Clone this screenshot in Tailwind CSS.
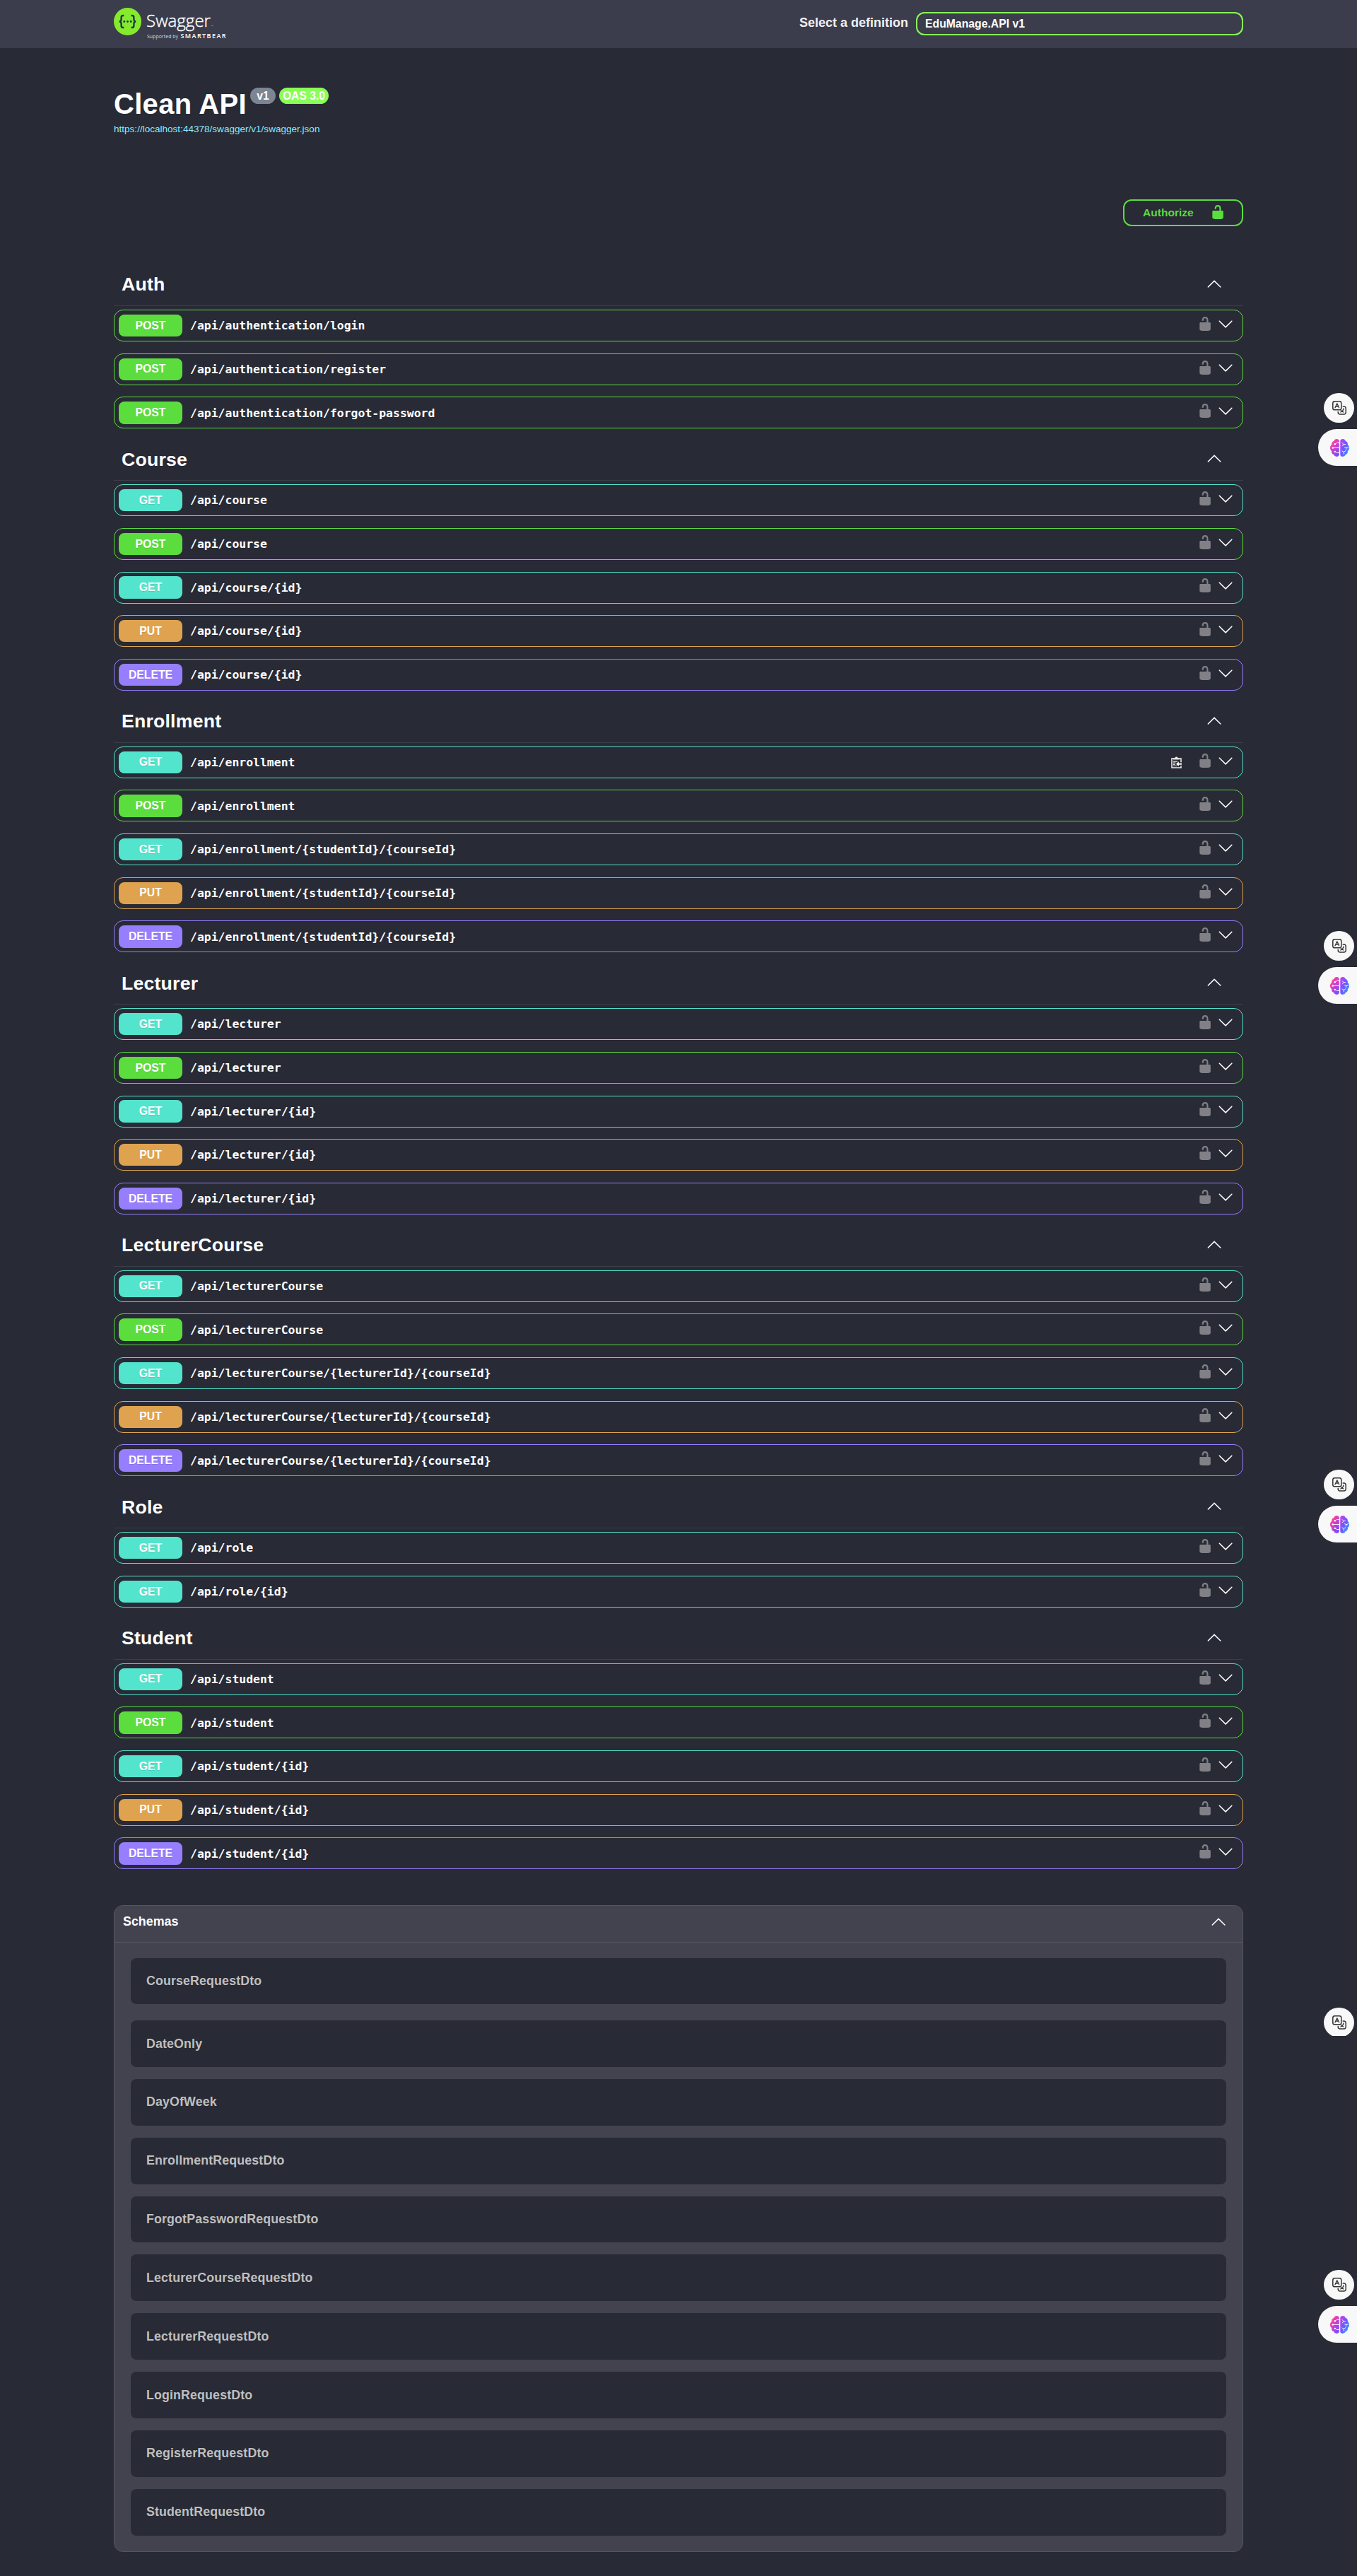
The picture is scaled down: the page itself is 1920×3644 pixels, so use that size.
<!DOCTYPE html>
<html lang="en">
<head>
<meta charset="utf-8">
<title>Swagger UI</title>
<script src="https://cdn.jsdelivr.net/npm/@tailwindcss/browser@4"></script>
</head>
<body class="relative h-[3644px] overflow-x-hidden bg-[#282a35] font-['Liberation_Sans',Arial,sans-serif] text-white">

<svg class="absolute size-0">
  <defs>
  <linearGradient id="bl" x1="0" y1="0" x2="0.7" y2="1"><stop offset="0" stop-color="#ff9a1f"/><stop offset=".35" stop-color="#f03cb4"/><stop offset="1" stop-color="#7a4dff"/></linearGradient>
  <linearGradient id="br" x1="0" y1="0" x2="1" y2="1"><stop offset="0" stop-color="#c83ee8"/><stop offset=".5" stop-color="#6b5cff"/><stop offset="1" stop-color="#1fb0ff"/></linearGradient>
  </defs>
  <symbol id="lock" viewBox="0 0 20 20"><path d="M15.8 8H14V5.6C14 2.703 12.665 1 10 1 7.334 1 6 2.703 6 5.6V6h2v-.801C8 3.754 8.797 3 10 3c1.203 0 2 .754 2 2.199V8H4c-.553 0-1 .646-1 1.199V17c0 .549.428 1.139.951 1.307l1.197.387C5.672 18.861 6.55 19 7.1 19h5.8c.549 0 1.428-.139 1.951-.307l1.196-.387c.524-.167.953-.757.953-1.306V9.199C17 8.646 16.352 8 15.8 8z"/></symbol>
  <symbol id="up" viewBox="0 0 20 20"><path d="M17.418 14.908c.272.268.709.268.979 0s.271-.701 0-.969l-7.908-7.83c-.27-.268-.707-.268-.979 0l-7.908 7.83c-.27.268-.27.701 0 .969.271.268.709.268.979 0L10 7.767l7.418 7.141z"/></symbol>
  <symbol id="down" viewBox="0 0 20 20"><path d="M17.418 6.109c.272-.268.709-.268.979 0s.271.701 0 .969l-7.908 7.83c-.27.268-.707.268-.979 0l-7.908-7.83c-.27-.268-.27-.701 0-.969.271-.268.709-.268.979 0L10 13.25l7.418-7.141z"/></symbol>
  <symbol id="clip" viewBox="0 0 15 17">
    <path d="M1 3h13v13H1z" fill="none" stroke="#e8e8e8" stroke-width="1.6"/>
    <path d="M3 4.6V2.6h2.4a2.1 2.1 0 0 1 4.200 0H12v2z" fill="#e8e8e8"/>
    <path d="M3 7.200h6M3 9.200h3.500M3 11.300h2.500M3 13.500h5" stroke="#e8e8e8" stroke-width="1.200"/>
    <path d="M12.500 8.300h2.500v4.800h-2.500z" fill="#282a35"/>
    <path d="M7 10.800l3.800-3.500v2.500H15v2h-4.200v2.500z" fill="#fff"/>
  </symbol>
  <symbol id="translate" viewBox="0 0 20 20">
    <g fill="none" stroke="#333" stroke-width="1.500" stroke-linecap="round" stroke-linejoin="round">
      <rect x=".8" y=".8" width="12" height="12" rx="2.600"/>
      <path d="M4 9.800l2.800-6 2.800 6M5 8h3.600" stroke-width="1.300"/>
      <path d="M15.200 8h1.600a2.400 2.400 0 0 1 2.400 2.400v6.200a2.400 2.400 0 0 1-2.400 2.400h-6.200a2.400 2.400 0 0 1-2.400-2.400v-1.200"/>
      <path d="M16.200 10.800c-.6 2.600-2.200 4.400-4.400 5.200M12.500 13.700c.8.300 1.300 1.300 3.300 2.300" stroke-width="1.300"/>
    </g>
  </symbol>
  <symbol id="brain" viewBox="0 0 27 25">
    <g fill="url(#bl)"><path d="M12.700 3v19.200c0 1.600-1.600 2.700-3.500 2.700-2 0-3.600-1-4-2.800-2.200-.4-3.700-2.600-3-5C.7 16.200 0 14.400 0 12.500c0-2 .8-3.600 2.200-4.500-.6-2.500.9-4.700 3-5C5.700 1.100 7.200.1 9.200.1c1.900 0 3.500 1.300 3.500 2.900z"/></g>
    <g fill="url(#br)"><path d="M14.300 3v19.200c0 1.600 1.600 2.700 3.500 2.700 2 0 3.600-1 4-2.800 2.200-.4 3.700-2.600 3-5 1.500-.9 2.200-2.700 2.200-4.600 0-2-.8-3.600-2.200-4.500.6-2.500-.9-4.700-3-5-.5-1.900-2-2.900-4-2.900-1.900 0-3.500 1.300-3.500 2.900z"/></g>
    <g fill="none" stroke="#fff" stroke-width=".9" stroke-linecap="round"><path d="M12.700 5.500H9.500L7 7.200M12.700 12.500H4M12.700 19.500H9.500L7 18"/><path d="M17 5.500l2 2h2.500M19 7.500l-1.500 2.300M26 11.500l-3 1.200-2.500-1M23 12.700l-.8 2M16.800 17l2.500 1.300 2.400-1.500M19.300 18.300V21"/></g>
    <g fill="#fff"><circle cx="6.800" cy="7.300" r="1.200"/><circle cx="3.800" cy="12.500" r="1.200"/><circle cx="6.800" cy="17.900" r="1.200"/></g>
  </symbol>
</svg>

<header class="h-[68px] bg-[#3b3d4c]">
  <div class="mx-auto flex h-full w-[1598px] items-start justify-between">
    <svg class="h-[68px] w-[170px]" viewBox="161 0 170 68">
      <circle cx="180.500" cy="30.500" r="19.500" fill="#85ea2d"/>
      <g fill="none" stroke="#173647" stroke-width="2.300" stroke-linecap="butt">
        <path d="M175.300 22h-1c-2 0-2.700.9-2.700 2.600v2.600c0 2.200-.8 3.200-2.800 3.300 2 .1 2.800 1.100 2.800 3.300v2.600c0 1.700.7 2.600 2.700 2.600h1"/>
        <path d="M185.700 22h1c2 0 2.700.9 2.700 2.600v2.600c0 2.200.8 3.200 2.800 3.300-2 .1-2.800 1.100-2.800 3.300v2.600c0 1.700-.7 2.600-2.700 2.600h-1"/>
      </g>
      <g fill="#173647"><circle cx="175.800" cy="30.500" r="1.400"/><circle cx="180.500" cy="30.500" r="1.400"/><circle cx="185.200" cy="30.500" r="1.400"/></g>
      <g fill="#fff">
        <text x="207" y="38" textLength="91" lengthAdjust="spacingAndGlyphs" font-family="Open Sans" font-weight="300" font-size="24.500" stroke="#fff" stroke-width=".4">Swagger</text>
        <text x="299" y="38" font-family="Open Sans" font-size="3">™</text>
        <text x="208" y="54" textLength="44" lengthAdjust="spacingAndGlyphs" font-family="Open Sans" font-size="7" fill="#d4d5da">Supported by</text>
        <text x="255.500" y="54" textLength="64" lengthAdjust="spacing" font-family="Open Sans" font-weight="600" font-size="9">SMARTBEAR</text>
      </g>
    </svg>
    <label class="flex items-center gap-[11px] pt-[17px] text-[18px] font-bold text-[#f0f0f0]">
      <span class="-mt-[2px]">Select a definition</span>
      <span class="flex h-[33px] w-[463px] items-center rounded-xl border-2 border-[#89fc58] pl-[11px] text-[15.75px] text-white">EduManage.API v1</span>
    </label>
  </div>
</header>

<main class="mx-auto w-[1598px]">
  <section class="h-[214px] pt-[54px]">
    <div class="flex items-start">
      <h1 class="w-[188px] pt-[3px] text-[40px] leading-[44px] font-bold tracking-[.3px] whitespace-nowrap">Clean API</h1>
      <div class="ml-[5px] flex gap-[5px] pt-[2px] text-[15.7px] leading-[23px] font-bold">
        <span class="w-9 rounded-full bg-[#7d8492] text-center">v1</span>
        <span class="w-[70px] rounded-full bg-[#89ff57] text-center">OAS 3.0</span>
      </div>
    </div>
    <a class="mt-[3.5px] block text-[13.55px] leading-[20px] text-[#8be9fd]">https://localhost:44378/swagger/v1/swagger.json</a>
  </section>
  <section class="flex h-[71px] justify-end">
    <button class="flex h-[38px] w-[170px] items-center rounded-xl border-2 border-[#5bdd3d] pl-[26px] text-[15.56px] font-bold text-[#5bdd3d]">Authorize
      <svg class="-mt-px ml-[23.5px] size-[22.2px] fill-[#5bdd3d]"><use href="#lock"/></svg>
    </button>
  </section>
  <div class="-mx-[161px] h-[22.9px] border-t border-[#252731]"></div>

  <div id="ops"></div>

  <section class="mt-[50.1px] rounded-[13px] border border-[#535560] bg-[#42434e]">
    <h4 class="flex h-[52px] items-center justify-between border-b border-[#535560] pr-[23px] pb-[6px] pl-[12px] text-[17.85px] font-bold">Schemas
      <svg class="size-[22.2px] fill-white"><use href="#up"/></svg>
    </h4>
    <div id="schemas" class="flex flex-col gap-[17.060px] px-[23px] py-[22px]"></div>
  </section>
</main>

<aside id="rail"></aside>

<script>
const badge = {
  GET: 'bg-[#53e4cd]', POST: 'bg-[#5bdd3d]', PUT: 'bg-[#dfa34f]', DELETE: 'bg-[#967eff]'
};
const edge = {
  GET: 'border-[#53e4cd]', POST: 'border-[#5bdd3d]', PUT: 'border-[#dfa34f]', DELETE: 'border-[#967eff]'
};
const crud = (base, key) => [['GET', base], ['POST', base], ['GET', base + key], ['PUT', base + key], ['DELETE', base + key]];
const groups = [
  ['Auth', [['POST', '/api/authentication/login'], ['POST', '/api/authentication/register'], ['POST', '/api/authentication/forgot-password']]],
  ['Course', crud('/api/course', '/{id}')],
  ['Enrollment', crud('/api/enrollment', '/{studentId}/{courseId}')],
  ['Lecturer', crud('/api/lecturer', '/{id}')],
  ['LecturerCourse', crud('/api/lecturerCourse', '/{lecturerId}/{courseId}')],
  ['Role', [['GET', '/api/role'], ['GET', '/api/role/{id}']]],
  ['Student', crud('/api/student', '/{id}')]
];
document.getElementById('ops').innerHTML = groups.map(([name, ops]) => `
  <section>
    <h3 class="mb-[5px] flex h-[57.1px] items-center justify-between border-b border-[#3b3d49] pr-[29.5px] pb-[2.500px] pl-[11px] text-[26.67px] leading-none font-bold tracking-[.2px]">${name}
      <svg class="-mt-[3px] size-[22.2px] fill-white"><use href="#up"/></svg>
    </h3>
    ${ops.map(([m, p], i) => `
    <div class="mb-[16.7px] flex h-[45px] items-center rounded-[13px] border ${edge[m]} pr-[12.5px] pl-[6px]">
      <span class="flex h-[31.3px] w-[90px] items-center justify-center rounded-lg text-[15.75px] font-bold [text-shadow:0_1px_0_rgba(0,0,0,.1)] ${badge[m]}">${m}</span>
      <span class="ml-[11px] flex-1 pt-[2px] font-['DejaVu_Sans_Mono',monospace] text-[16.45px] font-bold">${p}</span>
      ${name === 'Enrollment' && i === 0 ? '<svg class="mr-[22px] mt-[1px] h-[17px] w-[15px]"><use href="#clip"/></svg>' : ''}
      <svg class="-mt-[5px] size-[22.2px] fill-[#808086]"><use href="#lock"/></svg>
      <svg class="-mt-[5px] ml-[7px] size-[22.2px] fill-white"><use href="#down"/></svg>
    </div>`).join('')}
  </section>`).join('');

document.getElementById('schemas').innerHTML = ['CourseRequestDto', 'DateOnly', 'DayOfWeek', 'EnrollmentRequestDto', 'ForgotPasswordRequestDto', 'LecturerCourseRequestDto', 'LecturerRequestDto', 'LoginRequestDto', 'RegisterRequestDto', 'StudentRequestDto']
  .map(s => `<div class="flex h-[65.8px] items-center rounded-lg bg-[#282a35] pl-[22px] text-[17.78px] font-bold tracking-[.15px] text-[#bfbfbf] first:mb-[5.600px]">${s}</div>`).join('');

// Floating browser-extension buttons: [top, visible height of the round button, whether the assistant tab shows]
document.getElementById('rail').innerHTML = [[556, 42, true], [1317, 42, true], [2079, 42, true], [2840, 40, false], [3211, 42, true]]
  .map(([t, h, tab]) => `
    <div class="absolute right-[4px] w-[43px] overflow-hidden" style="top:${t}px;height:${h}px"><div class="flex h-[42px] items-center justify-center rounded-full bg-[#f8f8f8]"><svg class="size-5"><use href="#translate"/></svg></div></div>
    ${tab ? `<div class="absolute right-0 flex h-[52px] w-[55px] items-center rounded-l-full bg-[#f8f8f8] pl-[17px]" style="top:${t + 51}px"><svg class="h-[25px] w-[27px]"><use href="#brain"/></svg></div>` : ''}`).join('');
</script>
</body>
</html>
